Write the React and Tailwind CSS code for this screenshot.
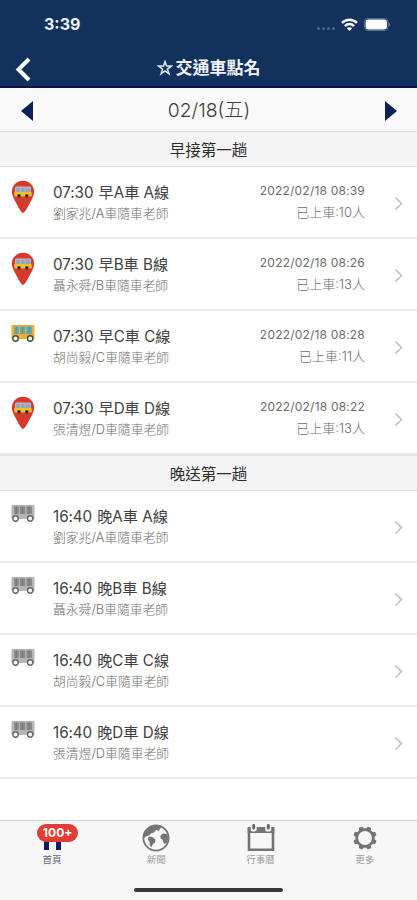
import React from 'react'

const morning = [
  { time: '07:30', name: '早A車 A線', staff: '劉家兆/A車隨車老師', date: '2022/02/18 08:39', count: '已上車:10人', icon: 'pin' },
  { time: '07:30', name: '早B車 B線', staff: '聶永舜/B車隨車老師', date: '2022/02/18 08:26', count: '已上車:13人', icon: 'pin' },
  { time: '07:30', name: '早C車 C線', staff: '胡尚毅/C車隨車老師', date: '2022/02/18 08:28', count: '已上車:11人', icon: 'bus' },
  { time: '07:30', name: '早D車 D線', staff: '張清煜/D車隨車老師', date: '2022/02/18 08:22', count: '已上車:13人', icon: 'pin' },
]

const evening = [
  { time: '16:40', name: '晚A車 A線', staff: '劉家兆/A車隨車老師', icon: 'idle' },
  { time: '16:40', name: '晚B車 B線', staff: '聶永舜/B車隨車老師', icon: 'idle' },
  { time: '16:40', name: '晚C車 C線', staff: '胡尚毅/C車隨車老師', icon: 'idle' },
  { time: '16:40', name: '晚D車 D線', staff: '張清煜/D車隨車老師', icon: 'idle' },
]

const gearTeeth = [22.5, 67.5, 112.5, 157.5, 202.5, 247.5, 292.5, 337.5]

const PinIcon = () => (
  <svg width="24" height="34" viewBox="0 0 24 34">
    <path d="M12 .8C5.800.8.9 5.500.9 11.500c0 4 2 7.300 4 11 2.200 4.200 5 9.800 7.100 10.500 2.100-.7 4.900-6.300 7.100-10.500 2-3.700 4-7 4-11C23.100 5.500 18.200.8 12 .8z" fill="#d8392f" />
    <rect x="4" y="6.500" width="16" height="7.500" rx="1" fill="#b3b9bd" />
    <path d="M5 8h4v4H5zM10 8h4v4h-4zM15 8h4v4h-4z" fill="#92a8b6" />
    <rect x="3.300" y="12" width="17.400" height="4.600" rx=".8" fill="#efbf2c" />
    <circle cx="8" cy="15.800" r="1.800" fill="#30302c" />
    <circle cx="15.800" cy="15.800" r="1.800" fill="#30302c" />
  </svg>
)

const BusIcon = ({ idle }) => {
  const body = idle ? '#b5b5b5' : '#e9ae35'
  const glass = idle ? '#8a8a8a' : '#69a9a8'
  return (
    <svg width="24" height="19" viewBox="0 0 24 19">
      <path d="M1.500 1h21c.6 0 1 .4 1 1v12c0 .6-.4 1-1 1h-21c-.7 0-1-.4-1-1V2c0-.6.4-1 1-1z" fill={body} />
      <path d="M3 2.500h4.800v7.500H3zM9 2.500h5.100V10H9zM15.500 2.500h5.500V10h-5.500z" fill={glass} />
      <path d="M5.400 2.500V10M11.500 2.500V10M18.200 2.500V10" stroke={idle ? '#777' : '#5193a3'} strokeWidth=".9" />
      <circle cx="4.500" cy="14.500" r="2.700" fill="#f2f2f2" stroke={idle ? '#666' : '#514735'} strokeWidth="1.400" />
      <circle cx="19.200" cy="14.500" r="2.700" fill="#f2f2f2" stroke={idle ? '#666' : '#514735'} strokeWidth="1.400" />
    </svg>
  )
}

const StatusBar = () => (
  <div className="flex h-12 items-center justify-between pr-[27px] pl-11">
    <span className="text-[16px] leading-none font-bold text-[#eef2fa]">3:39</span>
    <div className="flex items-center">
      <div className="mt-2 mr-[6px] flex gap-[2px]">
        <i className="h-[3px] w-[3px] rounded-full bg-[#4b678c]" />
        <i className="h-[3px] w-[3px] rounded-full bg-[#4b678c]" />
        <i className="h-[3px] w-[3px] rounded-full bg-[#4b678c]" />
        <i className="h-[3px] w-[3px] rounded-full bg-[#4b678c]" />
      </div>
      <svg width="17" height="13" viewBox="0 0 17 13" fill="none" stroke="#f4f7fb" strokeWidth="2.600">
        <path d="M1 4.900c4.300-4.200 10.700-4.200 15 0" />
        <path d="M3.900 8.100c2.700-2.600 6.500-2.600 9.200 0" />
        <path d="M8.500 13 5.800 10.200c1.500-1.400 3.900-1.400 5.400 0z" fill="#f4f7fb" stroke="none" />
      </svg>
      <svg className="ml-[6px]" width="26" height="13" viewBox="0 0 26 13">
        <rect x=".5" y=".5" width="23.500" height="12" rx="3.500" fill="none" stroke="#57718f" />
        <rect x="1.600" y="1.600" width="21.300" height="9.800" rx="2.400" fill="#fff" />
        <path d="M24.700 4.500c1.500.7 1.500 3.300 0 4z" fill="#8298b0" />
      </svg>
    </div>
  </div>
)

const Section = ({ title }) => (
  <h2 className="flex h-9 items-center justify-center border-y border-[#e0e0e0] bg-[#f4f4f4] pt-[3px] text-[15.500px] text-[#2c2c2c]">
    {title}
  </h2>
)

const Row = ({ item }) => (
  <li className="flex h-[72px] border-b-2 border-[#e9e9e9] pr-[13px] pl-[11px]">
    <div className="w-[42px] shrink-0 pt-[13px]">
      {item.icon === 'pin' ? <PinIcon /> : <BusIcon idle={item.icon === 'idle'} />}
    </div>
    <div className="flex-1 pt-[15px] whitespace-nowrap">
      <div className="flex h-[22px] items-center gap-[5px] text-[15.200px] text-[#404040]">
        <span className="tracking-[-0.05px]">{item.time}</span>
        <span>{item.name}</span>
      </div>
      <div className="flex h-[19px] items-center text-[12.800px] font-light text-[#707070]">{item.staff}</div>
    </div>
    {item.date && (
      <div className="flex flex-col items-end pt-[13px] whitespace-nowrap text-[#6c6c6c]">
        <div className="flex h-[22px] items-center text-[12px] tracking-[0.2px]">{item.date}</div>
        <div className="flex h-[22px] items-center text-[13px] font-light">{item.count}</div>
      </div>
    )}
    <svg className="mt-[29px] ml-[29px] shrink-0" width="10" height="15" viewBox="0 0 10 15" fill="none" stroke="#c2c2c2" strokeWidth="1.700">
      <path d="m1.500 1.500 6 6-6 6" />
    </svg>
  </li>
)

const Tab = ({ label, active, children }) => (
  <div className="flex flex-1 flex-col items-center pt-[2px]">
    <div className="flex h-[30px] items-center justify-center">{children}</div>
    <span className={active ? 'text-[9.500px] leading-[14px] text-[#626a80]' : 'text-[9.500px] leading-[14px] text-[#9c9c9c]'}>{label}</span>
  </div>
)

const App = () => {
  return (
    <div className="flex h-[900px] w-[417px] flex-col overflow-hidden bg-white font-['Inter','Noto_Sans_CJK_TC',sans-serif]">
      <header className="h-[88px] shrink-0 border-b-2 border-[#09134f] bg-[#12325d]">
        <StatusBar />
        <div className="grid h-[38px] grid-cols-[60px_1fr_60px] items-center">
          <svg className="mt-[5px] ml-[15px]" width="17" height="25" viewBox="0 0 17 25" fill="none" stroke="#fff" strokeWidth="4">
            <path d="M14 2 3.500 12.500 14 23" />
          </svg>
          <h1 className="flex items-center justify-center gap-[3px] pt-[3px] text-[17px] font-bold text-[#eef2f8]">
            <svg className="mb-[2px]" width="16" height="16" viewBox="0 0 16 16" fill="none" stroke="#e2e8f1" strokeWidth="1.500">
              <path d="m8 1.600 1.500 4.500h4.900l-3.900 3 1.500 4.800L8 11l-4 2.900 1.500-4.800-3.900-3h4.900z" />
            </svg>
            交通車點名
          </h1>
        </div>
      </header>

      <div className="flex h-[43px] shrink-0 items-center justify-between bg-[#f9f9f9] pt-[2px] pr-5 pl-[21px]">
        <svg width="12" height="20" viewBox="0 0 12 20"><path d="M12 0v20L0 10z" fill="#0c2058" /></svg>
        <span className="text-[19.300px] font-light text-[#3c3c3c]">02/18(五)</span>
        <svg width="12" height="20" viewBox="0 0 12 20"><path d="M0 0v20l12-10z" fill="#0c2058" /></svg>
      </div>

      <Section title="早接第一趟" />
      <ul>{morning.map((item) => <Row key={item.name} item={item} />)}</ul>
      <Section title="晚送第一趟" />
      <ul>{evening.map((item) => <Row key={item.name} item={item} />)}</ul>

      <nav className="mt-auto flex h-20 shrink-0 flex-col border-t border-[#cfcfcf] bg-[#f7f7f7]">
        <div className="flex">
          <Tab label="首頁" active>
            <div className="relative flex h-full w-6 items-end justify-center gap-[7px] pb-[3px]">
              <i className="h-[10px] w-[5px] bg-[#101d60]" />
              <i className="h-[10px] w-[5px] bg-[#101d60]" />
              <span className="absolute top-[1px] left-[-3px] flex h-[18px] w-[41px] items-center justify-center rounded-full bg-[#e43b32] text-[12px] font-bold text-white">100+</span>
            </div>
          </Tab>
          <Tab label="新聞">
            <svg width="28" height="28" viewBox="0 0 28 28">
              <circle cx="14" cy="14" r="12.600" fill="#f7f7f7" stroke="#747474" strokeWidth="1.800" />
              <path d="M7 3.500C11 .8 17 .8 20.500 3L18 4.500l-1 2.500-3-1-2 2.500-3 1L7 11.500 5 12l-3 2-.3-3.500z" fill="#747474" />
              <path d="m6.500 12.800 3.500 0 3.500 2.700-.5 3-2.500 2-1 2.500-1.500-1-.5-4-1.500-2.500z" fill="#747474" />
              <path d="m18.500 11.500 2.500-2 4 .5 1.500 4-2 5-2.500 1-1.500-4.500-2-1z" fill="#747474" />
            </svg>
          </Tab>
          <Tab label="行事曆">
            <svg width="28" height="28" viewBox="0 0 28 28">
              <path d="M2 4v21.800h24V4" fill="none" stroke="#747474" strokeWidth="2.600" />
              <path d="M.700 3h3v3c0 2 6 2 6 0V3h8.600v3c0 2 6 2 6 0V3h3v6H.7z" fill="#747474" />
              <rect x="5.300" y="0" width="2.800" height="5.500" rx="1.300" fill="#666" />
              <rect x="19.900" y="0" width="2.800" height="5.500" rx="1.300" fill="#666" />
            </svg>
          </Tab>
          <Tab label="更多">
            <svg width="24" height="24" viewBox="0 0 24 24">
              <circle cx="12" cy="12" r="8.300" fill="none" stroke="#747474" strokeWidth="2.800" />
              {gearTeeth.map((angle) => (
                <path key={angle} d="M9.300 3.600 10 .7c.3-.6 3.700-.6 4 0l.7 2.900z" fill="#747474" transform={`rotate(${angle} 12 12)`} />
              ))}
            </svg>
          </Tab>
        </div>
        <div className="mx-auto mt-[21px] h-1 w-[149px] rounded-full bg-[#3b3838]" />
      </nav>
    </div>
  )
}

export default App
